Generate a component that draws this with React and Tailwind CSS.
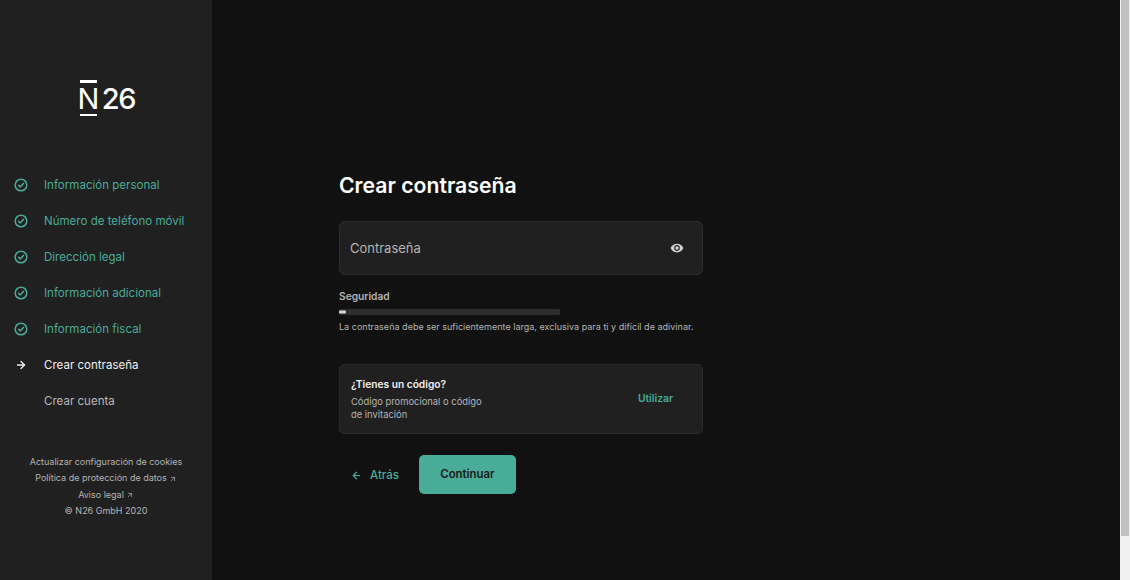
import { ArrowLeft, ArrowRight, ArrowUpRight } from "lucide-react";

const FONT = "font-['Inter','Liberation_Sans',sans-serif]";

const doneSteps = [
  "Información personal",
  "Número de teléfono móvil",
  "Dirección legal",
  "Información adicional",
  "Información fiscal",
];

function CheckIcon() {
  return (
    <svg width="14" height="14" viewBox="0 0 14 14" fill="none" stroke="#48ac98" strokeWidth="1.5">
      <circle cx="7" cy="7" r="5.8" />
      <path d="M4.5 7.2 L6.3 8.9 L9.6 5.3" strokeLinecap="round" strokeLinejoin="round" />
    </svg>
  );
}

function EyeIcon() {
  return (
    <svg width="14" height="14" viewBox="0 0 24 24" fill="#d0d0d0">
      <path d="M12 4.5C7 4.5 2.73 7.61 1 12c1.73 4.39 6 7.5 11 7.5s9.27-3.11 11-7.5c-1.73-4.39-6-7.5-11-7.5zM12 17c-2.76 0-5-2.24-5-5s2.24-5 5-5 5 2.24 5 5-2.24 5-5 5zm0-8c-1.66 0-3 1.34-3 3s1.34 3 3 3 3-1.34 3-3-1.34-3-3-3z" />
    </svg>
  );
}

function Logo() {
  return (
    <div className="flex justify-center items-center h-[36px] pl-[3px] text-white">
      <div className="flex flex-col items-center w-[17px] mr-[5px]">
        <div className="w-[17px] h-[2.5px] bg-white" />
        <span className="text-[29px] leading-[31px] font-normal">N</span>
        <div className="w-[17px] h-[2.5px] bg-white" />
      </div>
      <span className="text-[29px] leading-[31px] font-medium tracking-[-1.4px]">26</span>
    </div>
  );
}

function Sidebar() {
  return (
    <aside className="w-[212px] h-full shrink-0 bg-[#202020] pt-[80px]">
      <Logo />
      <ul className="mt-[51px] text-[11.5px] tracking-[0.02px]">
        {doneSteps.map((step) => (
          <li key={step} className="flex items-center h-[36px] pl-[14px] text-[#48ac98]">
            <CheckIcon />
            <span className="ml-[16px] pt-[1px]">{step}</span>
          </li>
        ))}
        <li className="flex items-center h-[36px] pl-[15px] text-[#f0f0f0]">
          <ArrowRight size={12} strokeWidth={2.6} />
          <span className="ml-[17px] pt-[1px]">Crear contraseña</span>
        </li>
        <li className="flex items-center h-[36px] pl-[44px] pt-[1px] text-[#b8b8b8]">Crear cuenta</li>
      </ul>
      <div className="mt-[35px] text-center text-[9px] leading-[16.4px] text-[#b4b4b4]">
        <p>Actualizar configuración de cookies</p>
        <p className="flex justify-center items-center gap-[2px]">
          Política de protección de datos <ArrowUpRight size={8} />
        </p>
        <p className="flex justify-center items-center gap-[2px]">
          Aviso legal <ArrowUpRight size={8} />
        </p>
        <p>© N26 GmbH 2020</p>
      </div>
    </aside>
  );
}

function Form() {
  return (
    <main className="flex-1 h-full bg-[#111111] pl-[127px] pt-[170px]">
      <div className="w-[364px]">
        <h1 className="text-[21.2px] leading-[30px] font-semibold text-white">Crear contraseña</h1>

        <div className="mt-[21px] h-[54px] flex items-center justify-between pl-[10px] pr-[18px] rounded-[6px] bg-[#202020] border border-[#2e2e2e]">
          <span className="pt-[1px] text-[13px] text-[#b4b4b4]">Contraseña</span>
          <EyeIcon />
        </div>

        <p className="mt-[14px] text-[10.2px] leading-[14px] font-semibold text-[#b4b4b4]">Seguridad</p>
        <div className="mt-[6px] w-[221px] h-[6px] bg-[#2e2e2e] rounded-[1px]">
          <div className="w-[7px] h-[3px] translate-y-[1.5px] bg-[#d8d8d8] rounded-[1px]" />
        </div>
        <p className="mt-[5px] text-[9px] leading-[14px] tracking-[0.02px] whitespace-nowrap text-[#b4b4b4]">
          La contraseña debe ser suficientemente larga, exclusiva para ti y difícil de adivinar.
        </p>

        <div className="mt-[30px] h-[70px] flex items-center justify-between pl-[11px] pr-[29px] rounded-[5px] bg-[#202020] border border-[#2a2a2a]">
          <div>
            <p className="text-[10.2px] leading-[15px] font-semibold text-[#f0f0f0]">¿Tienes un código?</p>
            <p className="mt-[3px] w-[140px] text-[9.4px] leading-[13.5px] text-[#b4b4b4]">
              Código promocional o código de invitación
            </p>
          </div>
          <span className="text-[10.3px] font-semibold text-[#48ac98]">Utilizar</span>
        </div>

        <div className="mt-[21px] flex items-center">
          <button type="button" className="flex items-center gap-[8px] ml-[12px] pt-[2px] text-[11.5px] font-medium text-[#48ac98]">
            <ArrowLeft size={11} strokeWidth={2.6} />
            Atrás
          </button>
          <button type="button" className="ml-[20px] w-[97px] h-[39px] rounded-[5px] bg-[#48ac98] text-[11.4px] font-semibold text-[#1a1a1a]">
            Continuar
          </button>
        </div>
      </div>
    </main>
  );
}

export default function App() {
  return (
    <div className={`flex h-[580px] overflow-hidden ${FONT}`}>
      <Sidebar />
      <Form />
      <div className="w-[10px] h-full shrink-0 bg-[#f1f1f1] px-[1px]">
        <div className="h-[536px] bg-[#c1c1c1]" />
      </div>
    </div>
  );
}
